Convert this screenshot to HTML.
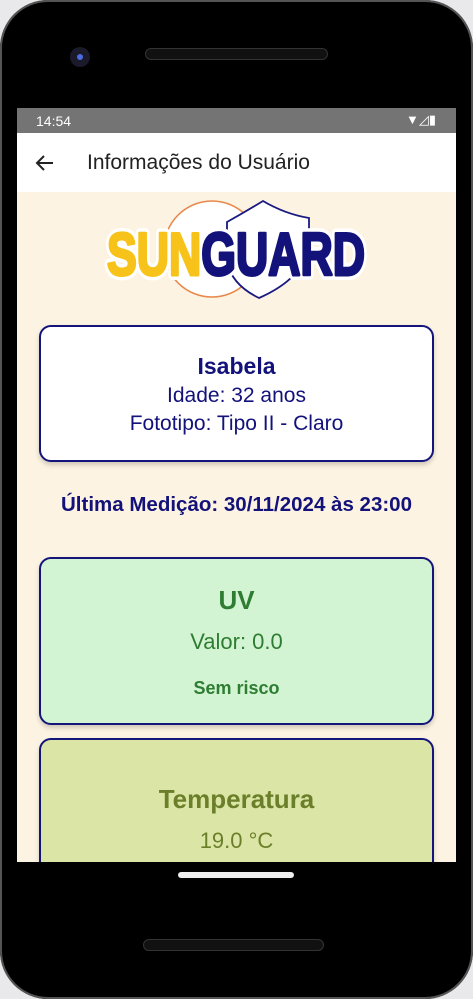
<!DOCTYPE html>
<html><head><meta charset="utf-8"><style>
*{margin:0;padding:0;box-sizing:border-box}
body{width:473px;height:999px;background:#e9e9ec;position:relative;overflow:hidden;font-family:"Liberation Sans",sans-serif}
.phone{position:absolute;left:0;top:0;width:473px;height:999px;background:#000;border-radius:48px;box-shadow:inset 0 0 0 2px #555}
.screen{position:absolute;left:17px;top:108px;width:439px;height:754px;background:#fdf3e2;overflow:hidden}
.status{height:25px;background:#747474;color:#fff;font-size:14px;padding:5px 0 0 19px}
.appbar{height:59px;background:#fff;display:flex;align-items:center}
.appbar .t{font-size:21px;color:#222;margin-left:31px}
.card{position:absolute;left:22px;width:395px;border:2px solid #14147a;border-radius:12px;text-align:center;box-shadow:0 3px 5px rgba(0,0,0,.18)}
.c{position:absolute;left:0;width:439px;text-align:center}
</style></head><body>
<div class="phone">
<div style="position:absolute;left:70px;top:47px;width:20px;height:20px;border-radius:50%;background:#1a1a2a"><div style="position:absolute;left:7px;top:7px;width:6px;height:6px;border-radius:50%;background:#4a6ae0"></div></div>
<div style="position:absolute;left:145px;top:48px;width:183px;height:12px;border-radius:6px;border:1px solid #333;background:#111"></div>
<div style="position:absolute;left:178px;top:872px;width:116px;height:6px;border-radius:3px;background:#eee"></div>
<div style="position:absolute;left:143px;top:939px;width:181px;height:12px;border-radius:6px;border:1px solid #333;background:#111"></div>
<div class="screen">
<div class="status">14:54<span style="position:absolute;right:20px;top:4px;font-size:13px">▼◿▮</span></div>
<div class="appbar"><svg width="22" height="22" style="margin-left:17px" viewBox="0 0 22 22"><path d="M19 11H4M10 4L3 11l7 7" stroke="#222" stroke-width="2" fill="none"/></svg><span class="t">Informações do Usuário</span></div>
<svg style="position:absolute;left:0;top:84px" width="439" height="110" viewBox="17 192 439 110">
<circle cx="212" cy="249" r="48" fill="#fff" stroke="#e8884a" stroke-width="1.5"/>
<path d="M227 222 Q245 212 263 201 Q285 214 309 218 L309 250 Q300 280 259 298 Q232 285 227 262 Z" fill="#fff" stroke="#1a1a80" stroke-width="1.8"/>
<text x="107" y="275" font-family="Liberation Sans" font-weight="bold" font-size="60" textLength="258" lengthAdjust="spacingAndGlyphs" stroke="#fff" stroke-width="10" stroke-linejoin="round" fill="#fff">SUNGUARD</text>
<text x="107" y="275" font-family="Liberation Sans" font-weight="bold" font-size="60" textLength="258" lengthAdjust="spacingAndGlyphs" stroke-width="3" stroke-linejoin="round"><tspan fill="#f7c31a" stroke="#f7c31a">SUN</tspan><tspan fill="#12127a" stroke="#12127a">GUARD</tspan></text>
</svg>
<div class="card" style="top:217px;height:137px;background:#fff;color:#12127a">
<div style="font-size:23px;font-weight:bold;margin-top:26px">Isabela</div>
<div style="font-size:21px;margin-top:4px">Idade: 32 anos</div>
<div style="font-size:21px;margin-top:4px">Fototipo: Tipo II - Claro</div>
</div>
<div class="c" style="top:385px;font-size:20.5px;font-weight:bold;color:#12127a">Última Medição: 30/11/2024 às 23:00</div>
<div class="card" style="top:449px;height:168px;background:#d3f4d3;color:#2e7d32">
<div style="font-size:26px;font-weight:bold;margin-top:26px">UV</div>
<div style="font-size:22px;margin-top:13px">Valor: 0.0</div>
<div style="font-size:18px;font-weight:bold;margin-top:23px">Sem risco</div>
</div>
<div class="card" style="top:630px;height:160px;background:#dbe6a6;color:#6b7f2a">
<div style="font-size:26px;font-weight:bold;margin-top:44px">Temperatura</div>
<div style="font-size:22px;margin-top:13px">19.0 °C</div>
</div>
</div>
</div>
</body></html>
